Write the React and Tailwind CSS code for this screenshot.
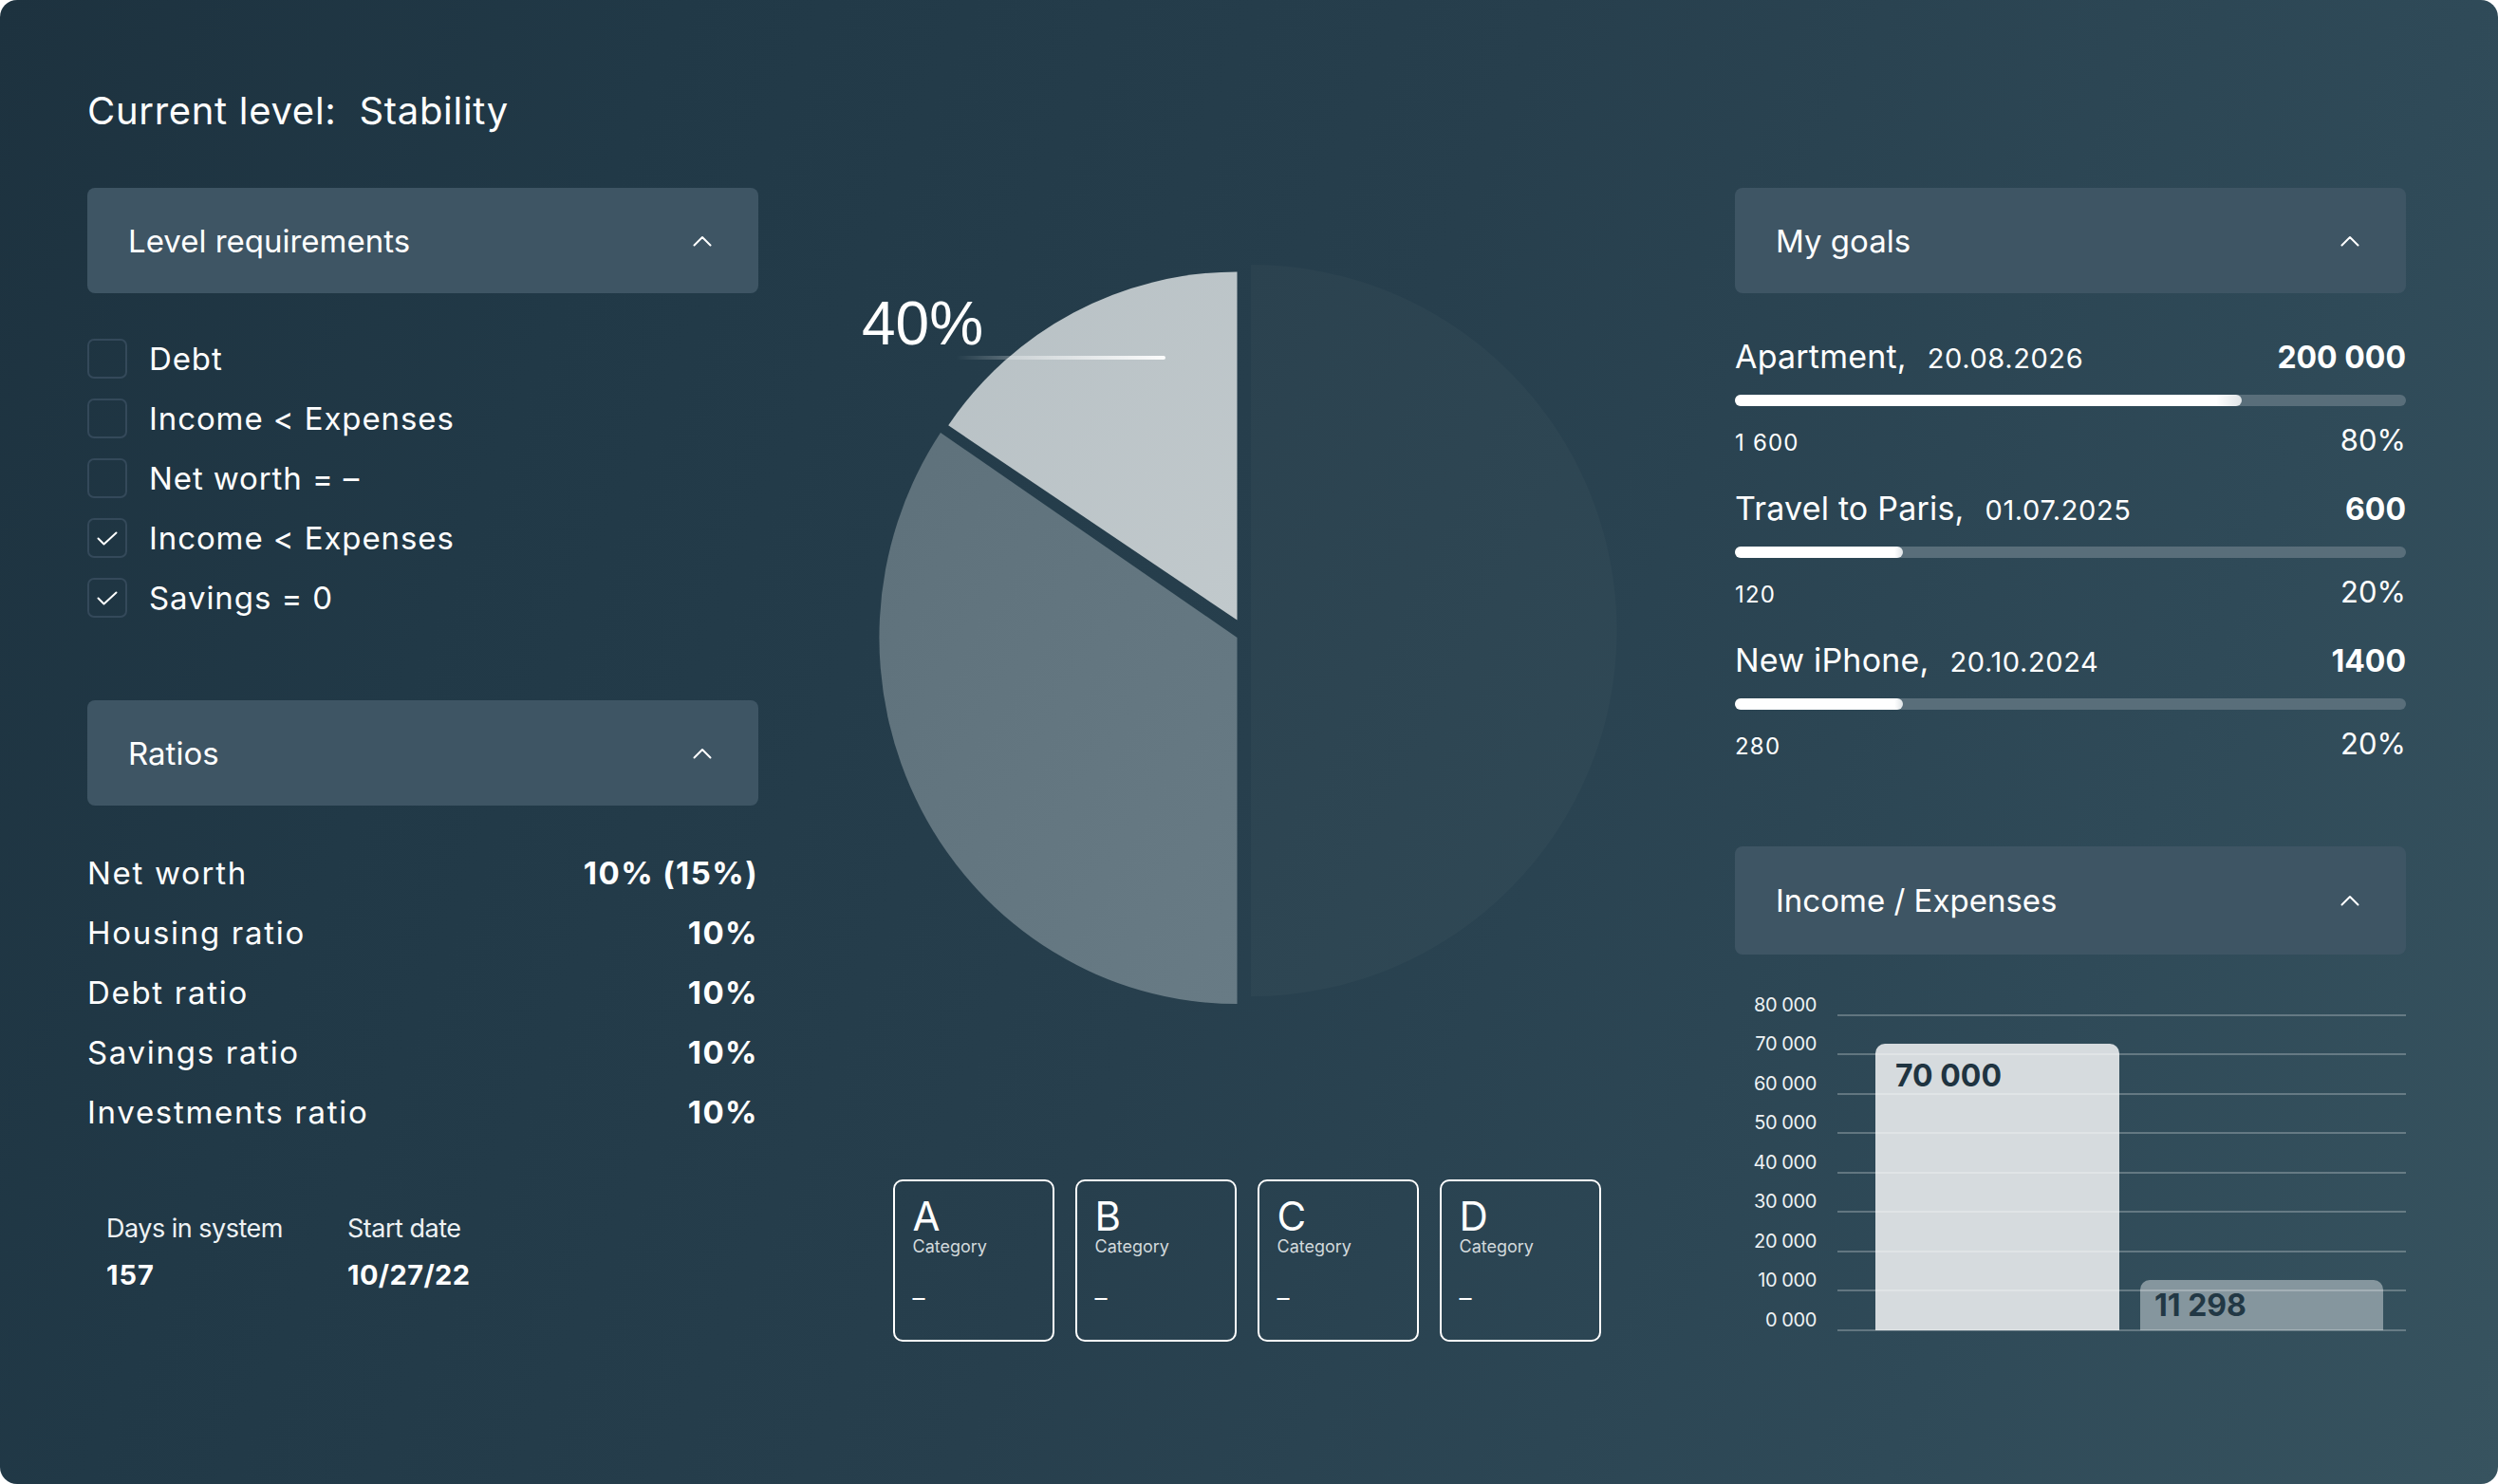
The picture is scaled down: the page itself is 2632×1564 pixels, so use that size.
import React from "react";

function Chevron() {
  return (
    <svg width="20" height="12" viewBox="0 0 20 12" fill="none">
      <path d="M1.5 10.5 L10 2 L18.5 10.5" stroke="white" strokeWidth="2" strokeLinecap="round" strokeLinejoin="round" />
    </svg>
  );
}

function Header({ title, className }) {
  return (
    <div className={className}>
      <div className="flex h-full items-center justify-between rounded-lg bg-[#3e5564] pl-[43px] pr-[49px]">
        <span className="text-[33px] leading-[40px] text-white">{title}</span>
        <Chevron />
      </div>
    </div>
  );
}

const checks = [
  ["Debt", false],
  ["Income < Expenses", false],
  ["Net worth = –", false],
  ["Income < Expenses", true],
  ["Savings = 0", true],
];

const ratios = [
  ["Net worth", "10% (15%)"],
  ["Housing ratio", "10%"],
  ["Debt ratio", "10%"],
  ["Savings ratio", "10%"],
  ["Investments ratio", "10%"],
];

const goals = [
  { name: "Apartment,", date: "20.08.2026", amount: "200 000", fill: "75.5%", saved: "1 600", pct: "80%" },
  { name: "Travel to Paris,", date: "01.07.2025", amount: "600", fill: "25%", saved: "120", pct: "20%" },
  { name: "New iPhone,", date: "20.10.2024", amount: "1400", fill: "25%", saved: "280", pct: "20%" },
];

const yLabels = ["80 000", "70 000", "60 000", "50 000", "40 000", "30 000", "20 000", "10 000", "0 000"];

function Pie() {
  return (
    <svg width="1029" height="830" viewBox="799 250 1029 830" className="mt-[52px]">
      <defs>
        <linearGradient id="gDark" x1="0" y1="0" x2="1" y2="1">
          <stop offset="0" stopColor="#2b424f" />
          <stop offset="1" stopColor="#304956" />
        </linearGradient>
        <linearGradient id="gMid" x1="0" y1="0" x2="1" y2="1">
          <stop offset="0" stopColor="#5e717b" />
          <stop offset="1" stopColor="#687b85" />
        </linearGradient>
        <linearGradient id="gLight" x1="0" y1="0" x2="1" y2="1">
          <stop offset="0" stopColor="#b8c1c5" />
          <stop offset="1" stopColor="#c1c9cc" />
        </linearGradient>
        <linearGradient id="gLine" x1="1007" y1="0" x2="1228" y2="0" gradientUnits="userSpaceOnUse">
          <stop offset="0" stopColor="#ffffff" stopOpacity="0" />
          <stop offset="0.45" stopColor="#ffffff" stopOpacity="0.45" />
          <stop offset="1" stopColor="#ffffff" stopOpacity="0.95" />
        </linearGradient>
      </defs>
      <path d="M1318 279 A385.5 385.5 0 0 1 1318 1050 Z" fill="url(#gDark)" />
      <path d="M1303.5 672 L1303.5 1058 A377 386 0 0 1 991 456 Z" fill="url(#gMid)" />
      <path d="M1303.5 653.5 L999.2 448.3 A367 367 0 0 1 1303.5 286.5 Z" fill="url(#gLight)" />
      <rect x="1007" y="375" width="221" height="4" rx="2" fill="url(#gLine)" />
    </svg>
  );
}

function Card({ letter }) {
  return (
    <div className="flex h-[171px] w-[170px] flex-col rounded-[10px] border-2 border-white pl-[19px] pt-[16px]">
      <div className="text-[42px] leading-[42px] text-white">{letter}</div>
      <div className="text-[18px] leading-[22px] text-[#d3dadd]">Category</div>
      <div className="mt-[30px] text-[26px] leading-[26px] text-white">–</div>
    </div>
  );
}

export default function App() {
  return (
    <div className="h-[1564px] w-[2632px] bg-white">
      <div className="h-[1564px] w-[2632px] overflow-hidden rounded-[18px] bg-[linear-gradient(112deg,#1d323f_0%,#213947_22%,#273f4d_50%,#2f4a58_80%,#37535f_100%)] pl-[92px] pt-[93px] font-['Inter',sans-serif] text-white">
        <div className="h-[48px] text-[40px] leading-[48px] tracking-[0.7px]">Current level:{"\u00a0 "}Stability</div>

        <div className="mt-[57px] flex items-start">
          {/* Left column */}
          <div className="w-[707px]">
            <Header title="Level requirements" className="h-[111px]" />
            <div className="mt-[48px] flex flex-col gap-[21px]">
              {checks.map(([t, c], i) => (
                <div key={i} className="flex h-[42px] items-center">
                  <div className="flex h-[42px] w-[42px] items-center justify-center rounded-[7px] border-2 border-[#34495a]">
                    {c && (
                      <svg width="22" height="15" viewBox="0 0 22 15" fill="none">
                        <path d="M1.5 7.5 L7.5 13.5 L20.5 1.5" stroke="white" strokeWidth="2" strokeLinecap="round" strokeLinejoin="round" />
                      </svg>
                    )}
                  </div>
                  <span className="ml-[23px] text-[33px] leading-[42px] tracking-[0.9px]">{t}</span>
                </div>
              ))}
            </div>

            <Header title="Ratios" className="mt-[87px] h-[111px]" />
            <div className="mt-[40px] flex flex-col">
              {ratios.map(([l, v]) => (
                <div key={l} className="flex h-[63px] items-center justify-between text-[33px] tracking-[1.7px]">
                  <span>{l}</span>
                  <span className="font-bold tracking-[1.4px]">{v}</span>
                </div>
              ))}
            </div>

            <div className="mt-[74px] flex pl-[20px]">
              <div className="w-[254px]">
                <div className="text-[27px] leading-[34px] tracking-[-0.5px] text-[#eef2f4]">Days in system</div>
                <div className="mt-[15px] text-[29px] font-bold leading-[34px] tracking-[1px]">157</div>
              </div>
              <div>
                <div className="text-[27px] leading-[34px] tracking-[-0.5px] text-[#eef2f4]">Start date</div>
                <div className="mt-[15px] text-[29px] font-bold leading-[34px] tracking-[0.4px]">10/27/22</div>
              </div>
            </div>
          </div>

          {/* Center column */}
          <div className="relative w-[1029px]">
            <Pie />
            <div className="absolute left-[109px] top-[111px] font-['Liberation_Sans',sans-serif] text-[64px] leading-[64px] text-white">40%</div>
            <div className="mt-[163px] flex justify-center gap-[22px]">
              {["A", "B", "C", "D"].map((l) => (
                <Card key={l} letter={l} />
              ))}
            </div>
          </div>

          {/* Right column */}
          <div className="w-[707px]">
            <Header title="My goals" className="h-[111px]" />
            <div className="mt-[47px] flex flex-col gap-[36px]">
              {goals.map((g) => (
                <div key={g.name}>
                  <div className="flex h-[40px] items-baseline justify-between">
                    <div className="flex items-baseline">
                      <span className="text-[34px] leading-[40px] tracking-[0.2px]">{g.name}</span>
                      <span className="ml-[22px] text-[29px] leading-[40px] tracking-[0.6px]">{g.date}</span>
                    </div>
                    <span className="text-[32px] font-bold leading-[40px]">{g.amount}</span>
                  </div>
                  <div className="mt-[20px] h-[12px] rounded-full bg-[#596e7a]">
                    <div
                      className="h-[12px] rounded-full bg-[linear-gradient(90deg,#ffffff_0%,#ffffff_95%,#dfe4e7_100%)]"
                      style={{ width: g.fill }}
                    />
                  </div>
                  <div className="mt-[20px] flex h-[32px] items-baseline justify-between">
                    <span className="text-[24px] leading-[32px] tracking-[1.2px]">{g.saved}</span>
                    <span className="text-[31px] leading-[32px]">{g.pct}</span>
                  </div>
                </div>
              ))}
            </div>

            <Header title="Income / Expenses" className="mt-[92px] h-[114px]" />

            <div className="relative mt-[34px] h-[362px]">
              <div className="absolute bottom-0 left-[148px] flex h-[302px] w-[257px] items-start rounded-t-[10px] bg-[#d6dbde] pl-[21px] pt-[18px]">
                <span className="text-[32px] font-bold leading-[32px] text-[#1f3441]">70 000</span>
              </div>
              <div className="absolute bottom-0 left-[427px] flex h-[53px] w-[256px] items-start rounded-t-[10px] bg-[#85969e] pl-[15px] pt-[11px]">
                <span className="text-[32px] font-bold leading-[32px] text-[#223845]">11 298</span>
              </div>
              {yLabels.map((l, i) => (
                <React.Fragment key={l}>
                  <div
                    className="absolute left-[108px] right-0 h-[2px] bg-[#ffffff]/25"
                    style={{ top: 29 + i * 41.44 }}
                  />
                  <div
                    className="absolute left-0 w-[86px] text-right text-[20px] leading-[20px] tracking-[-0.4px] text-[#eef2f4]"
                    style={{ top: 30 + i * 41.44 - 21 }}
                  >
                    {l}
                  </div>
                </React.Fragment>
              ))}
            </div>
          </div>
        </div>
      </div>
    </div>
  );
}
